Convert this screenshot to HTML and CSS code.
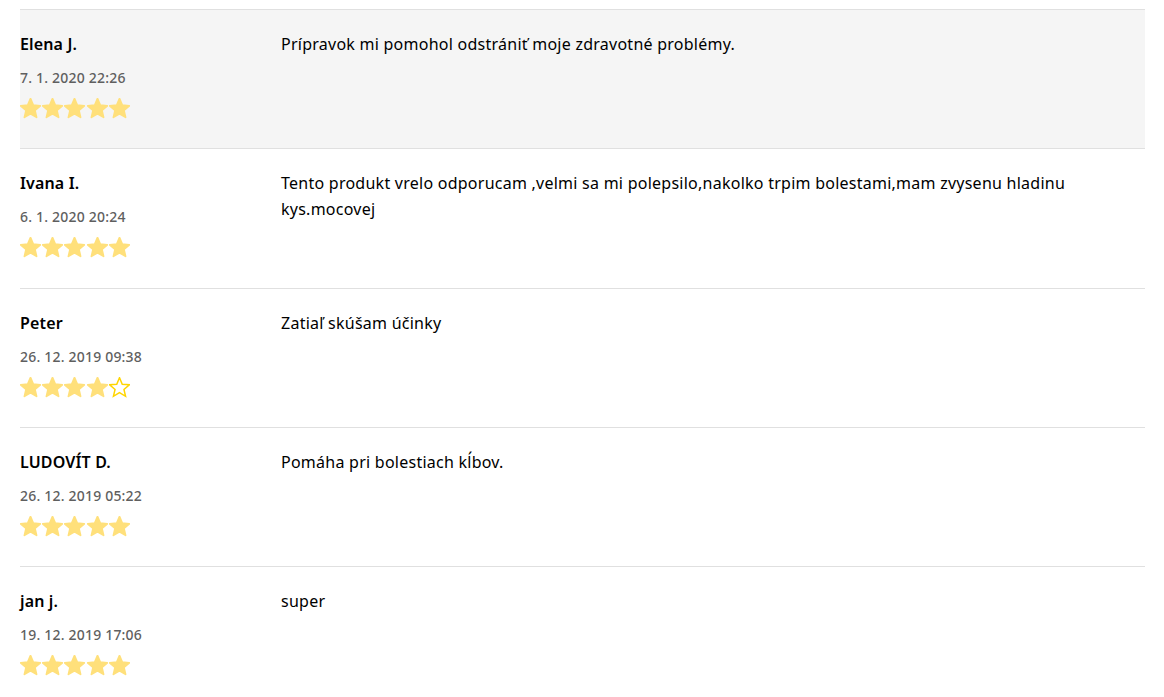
FILE: index.html
```html
<!DOCTYPE html>
<html lang="sk">
<head>
<meta charset="utf-8">
<title>Recenzie</title>
<link rel="stylesheet" href="styles.css">
</head>
<body>
<svg width="0" height="0" class="defs" aria-hidden="true">
  <defs>
    <path id="star" d="M12 17.27L18.18 21l-1.64-7.03L22 9.24l-7.19-.61L12 2 9.19 8.63 2 9.24l5.46 4.73L5.82 21z"/>
  </defs>
</svg>
<div class="reviews">
  <div class="review review--hl">
    <div class="meta">
      <div class="name">Elena J.</div>
      <div class="date">7. 1. 2020 22:26</div>
      <div class="stars">
        <svg class="star" viewBox="1.3 1.3 21.4 21.4"><use href="#star"/></svg>
        <svg class="star" viewBox="1.3 1.3 21.4 21.4"><use href="#star"/></svg>
        <svg class="star" viewBox="1.3 1.3 21.4 21.4"><use href="#star"/></svg>
        <svg class="star" viewBox="1.3 1.3 21.4 21.4"><use href="#star"/></svg>
        <svg class="star" viewBox="1.3 1.3 21.4 21.4"><use href="#star"/></svg>
      </div>
    </div>
    <div class="text">Prípravok mi pomohol odstrániť moje zdravotné problémy.</div>
  </div>
  <div class="review">
    <div class="meta">
      <div class="name">Ivana I.</div>
      <div class="date">6. 1. 2020 20:24</div>
      <div class="stars">
        <svg class="star" viewBox="1.3 1.3 21.4 21.4"><use href="#star"/></svg>
        <svg class="star" viewBox="1.3 1.3 21.4 21.4"><use href="#star"/></svg>
        <svg class="star" viewBox="1.3 1.3 21.4 21.4"><use href="#star"/></svg>
        <svg class="star" viewBox="1.3 1.3 21.4 21.4"><use href="#star"/></svg>
        <svg class="star" viewBox="1.3 1.3 21.4 21.4"><use href="#star"/></svg>
      </div>
    </div>
    <div class="text">Tento produkt vrelo odporucam ,velmi sa mi polepsilo,nakolko trpim bolestami,mam zvysenu hladinu kys.mocovej</div>
  </div>
  <div class="review">
    <div class="meta">
      <div class="name">Peter</div>
      <div class="date">26. 12. 2019 09:38</div>
      <div class="stars">
        <svg class="star" viewBox="1.3 1.3 21.4 21.4"><use href="#star"/></svg>
        <svg class="star" viewBox="1.3 1.3 21.4 21.4"><use href="#star"/></svg>
        <svg class="star" viewBox="1.3 1.3 21.4 21.4"><use href="#star"/></svg>
        <svg class="star" viewBox="1.3 1.3 21.4 21.4"><use href="#star"/></svg>
        <svg class="star star--empty" viewBox="1.3 1.3 21.4 21.4"><use href="#star"/></svg>
      </div>
    </div>
    <div class="text">Zatiaľ skúšam účinky</div>
  </div>
  <div class="review">
    <div class="meta">
      <div class="name">LUDOVÍT D.</div>
      <div class="date">26. 12. 2019 05:22</div>
      <div class="stars">
        <svg class="star" viewBox="1.3 1.3 21.4 21.4"><use href="#star"/></svg>
        <svg class="star" viewBox="1.3 1.3 21.4 21.4"><use href="#star"/></svg>
        <svg class="star" viewBox="1.3 1.3 21.4 21.4"><use href="#star"/></svg>
        <svg class="star" viewBox="1.3 1.3 21.4 21.4"><use href="#star"/></svg>
        <svg class="star" viewBox="1.3 1.3 21.4 21.4"><use href="#star"/></svg>
      </div>
    </div>
    <div class="text">Pomáha pri bolestiach kĺbov.</div>
  </div>
  <div class="review">
    <div class="meta">
      <div class="name">jan j.</div>
      <div class="date">19. 12. 2019 17:06</div>
      <div class="stars">
        <svg class="star" viewBox="1.3 1.3 21.4 21.4"><use href="#star"/></svg>
        <svg class="star" viewBox="1.3 1.3 21.4 21.4"><use href="#star"/></svg>
        <svg class="star" viewBox="1.3 1.3 21.4 21.4"><use href="#star"/></svg>
        <svg class="star" viewBox="1.3 1.3 21.4 21.4"><use href="#star"/></svg>
        <svg class="star" viewBox="1.3 1.3 21.4 21.4"><use href="#star"/></svg>
      </div>
    </div>
    <div class="text">super</div>
  </div>
</div>
</body>
</html>
```
FILE: styles.css
```css
html, body {
  margin: 0;
  padding: 0;
  background: #fff;
}
body {
  font-family: "Noto Sans", "Open Sans", "DejaVu Sans", sans-serif;
  color: #000;
  overflow: hidden;
}
.defs {
  position: absolute;
  width: 0;
  height: 0;
}
.reviews {
  padding: 9px 19px 0 20px;
}
.review {
  display: grid;
  grid-template-columns: 261px 1fr;
  border-top: 1px solid #e0e0e0;
  padding: 22px 0 29.25px;
}
.review--hl {
  background: #f5f5f5;
}
.name {
  font-size: 16px;
  line-height: 24px;
  font-weight: 600;
  letter-spacing: 0.15px;
}
.date {
  margin-top: 12px;
  font-size: 14px;
  line-height: 20px;
  font-weight: 500;
  color: #5f5f5f;
  letter-spacing: 0.2px;
}
.stars {
  margin-top: 10px;
  display: flex;
  gap: 1.2px;
  height: 21px;
}
.star {
  width: 21px;
  height: 21px;
  fill: #ffe07b;
  stroke: #ffe07b;
  stroke-width: 1.8;
  stroke-linejoin: round;
}
.star--empty {
  fill: none;
  stroke: #ffd500;
  stroke-width: 1.5;
  stroke-linejoin: miter;
}
.text {
  font-size: 16px;
  line-height: 26px;
  margin-top: -1px;
  padding-right: 60px;
  letter-spacing: 0.25px;
}
```
